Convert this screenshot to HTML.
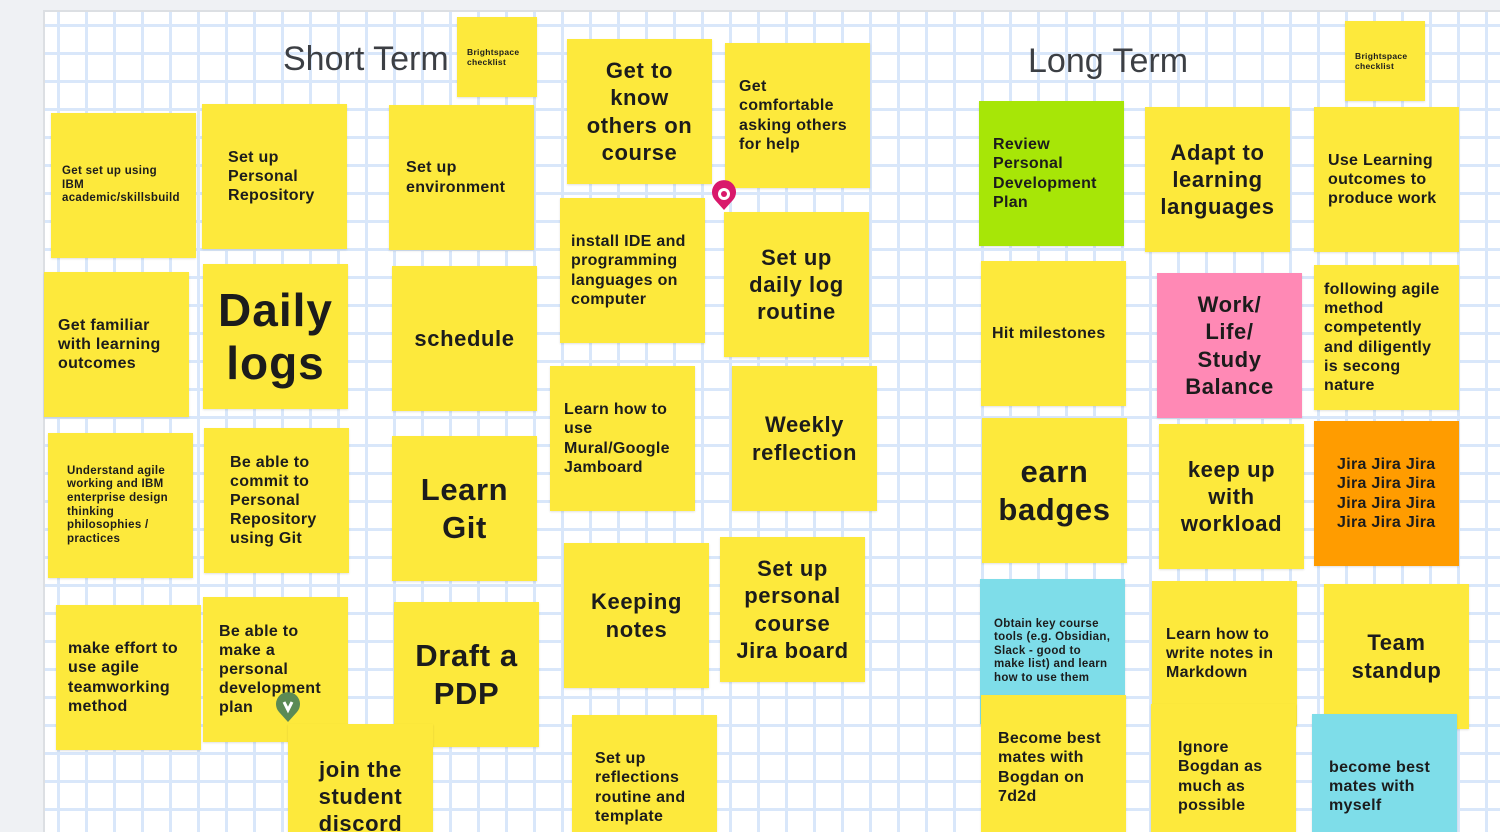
<!DOCTYPE html><html><head><meta charset="utf-8"><style>
*{margin:0;padding:0;box-sizing:border-box}
html,body{width:1500px;height:832px;overflow:hidden}
body{background:#eff1f4;font-family:"Liberation Sans",sans-serif;position:relative}
#board{position:absolute;left:43px;top:10px;width:1470px;height:830px;border-left:2px solid #dcdfe3;border-top:2px solid #dcdfe3;
background-color:#fff;background-image:linear-gradient(to right,#d9e7fa 3px,transparent 3px),linear-gradient(to bottom,#d9e7fa 3px,transparent 3px);
background-size:28px 28px;background-position:12px 12px}
.n{position:absolute;width:145px;height:145px;background:#fde93c;display:flex;align-items:center;padding:0 8px 0 14px;font-weight:bold;color:#1c1c1c;line-height:1.2;box-shadow:0 1px 2px rgba(0,0,0,.12);letter-spacing:.3px;white-space:nowrap}
.c{justify-content:center;text-align:center;padding:0 4px}
.s16{font-size:16px}.s22{font-size:22px;line-height:1.24;letter-spacing:.6px}.s32{font-size:31px;line-height:1.2;letter-spacing:.6px}.s12{font-size:11.5px;line-height:1.18}
.t{position:absolute;font-size:34px;color:#3c3f44}
.sm{width:80px;height:80px;font-size:8.5px;line-height:1.2;padding:0 10px}
</style></head><body>
<div id="board"></div>
<div class="t" style="left:283px;top:40px">Short Term</div>
<div class="t" style="left:1028px;top:42px">Long Term</div>

<div class="n sm" style="left:457px;top:17px">Brightspace<br>checklist</div>
<div class="n c s22" style="left:567px;top:39px">Get to<br>know<br>others on<br>course</div>
<div class="n s16" style="left:725px;top:43px">Get<br>comfortable<br>asking others<br>for help</div>
<div class="n s12" style="left:51px;top:113px;padding-left:11px">Get set up using<br>IBM<br>academic/skillsbuild</div>
<div class="n s16" style="left:202px;top:104px;padding-left:26px">Set up<br>Personal<br>Repository</div>
<div class="n s16" style="left:389px;top:105px;padding-left:17px">Set up<br>environment</div>
<div class="n s16" style="left:560px;top:198px;padding-left:11px">install IDE and<br>programming<br>languages on<br>computer</div>
<div class="n c s22" style="left:724px;top:212px">Set up<br>daily log<br>routine</div>
<div class="n s16" style="left:44px;top:272px">Get familiar<br>with learning<br>outcomes</div>
<div class="n c" style="left:203px;top:264px;font-size:46px;line-height:1.15;letter-spacing:1px">Daily<br>logs</div>
<div class="n c s22" style="left:392px;top:266px">schedule</div>
<div class="n s16" style="left:550px;top:366px">Learn how to<br>use<br>Mural/Google<br>Jamboard</div>
<div class="n c s22" style="left:732px;top:366px">Weekly<br>reflection</div>
<div class="n s12" style="left:48px;top:433px;padding-left:19px">Understand agile<br>working and IBM<br>enterprise design<br>thinking<br>philosophies /<br>practices</div>
<div class="n s16" style="left:204px;top:428px;padding-left:26px">Be able to<br>commit to<br>Personal<br>Repository<br>using Git</div>
<div class="n c s32" style="left:392px;top:436px">Learn<br>Git</div>
<div class="n c s22" style="left:564px;top:543px">Keeping<br>notes</div>
<div class="n c s22" style="left:720px;top:537px">Set up<br>personal<br>course<br>Jira board</div>
<div class="n s16" style="left:56px;top:605px;padding-left:12px">make effort to<br>use agile<br>teamworking<br>method</div>
<div class="n s16" style="left:203px;top:597px;padding-left:16px">Be able to<br>make a<br>personal<br>development<br>plan</div>
<div class="n c s32" style="left:394px;top:602px">Draft a<br>PDP</div>
<div class="n c s22" style="left:288px;top:724px">join the<br>student<br>discord</div>
<div class="n s16" style="left:572px;top:715px;padding-left:23px">Set up<br>reflections<br>routine and<br>template</div>

<div class="n sm" style="left:1345px;top:21px">Brightspace<br>checklist</div>
<div class="n s16" style="left:979px;top:101px;background:#a7e607">Review<br>Personal<br>Development<br>Plan</div>
<div class="n c s22" style="left:1145px;top:107px">Adapt to<br>learning<br>languages</div>
<div class="n s16" style="left:1314px;top:107px">Use Learning<br>outcomes to<br>produce work</div>
<div class="n s16" style="left:981px;top:261px;padding-left:11px">Hit milestones</div>
<div class="n c s22" style="left:1157px;top:273px;background:#ff89b5">Work/<br>Life/<br>Study<br>Balance</div>
<div class="n s16" style="left:1314px;top:265px;padding-left:10px">following agile<br>method<br>competently<br>and diligently<br>is secong<br>nature</div>
<div class="n c s32" style="left:982px;top:418px">earn<br>badges</div>
<div class="n c s22" style="left:1159px;top:424px">keep up<br>with<br>workload</div>
<div class="n s16" style="left:1314px;top:421px;background:#ff9c00;padding-left:23px">Jira Jira Jira<br>Jira Jira Jira<br>Jira Jira Jira<br>Jira Jira Jira</div>
<div class="n s12" style="left:980px;top:579px;background:#7edde9">Obtain key course<br>tools (e.g. Obsidian,<br>Slack - good to<br>make list) and learn<br>how to use them</div>
<div class="n s16" style="left:1152px;top:581px">Learn how to<br>write notes in<br>Markdown</div>
<div class="n c s22" style="left:1324px;top:584px">Team<br>standup</div>
<div class="n s16" style="left:981px;top:695px;padding-left:17px">Become best<br>mates with<br>Bogdan on<br>7d2d</div>
<div class="n s16" style="left:1151px;top:704px;padding-left:27px">Ignore<br>Bogdan as<br>much as<br>possible</div>
<div class="n s16" style="left:1312px;top:714px;background:#7edde9;padding-left:17px">become best<br>mates with<br>myself</div>

<svg style="position:absolute;left:711px;top:180px" width="26" height="32" viewBox="0 0 26 32"><path d="M13 30 L4 20 A12 12 0 1 1 22 20 Z" fill="#d9186b"/><circle cx="13" cy="14" r="6" fill="#fff"/><circle cx="13" cy="14" r="3" fill="#d9186b"/></svg>
<svg style="position:absolute;left:275px;top:692px" width="26" height="32" viewBox="0 0 26 32"><path d="M13 30 L4 20 A12 12 0 1 1 22 20 Z" fill="#5b8a55"/><path d="M9 10 L13 18 L17 10" stroke="#fff" stroke-width="3" fill="none"/></svg>
</body></html>
